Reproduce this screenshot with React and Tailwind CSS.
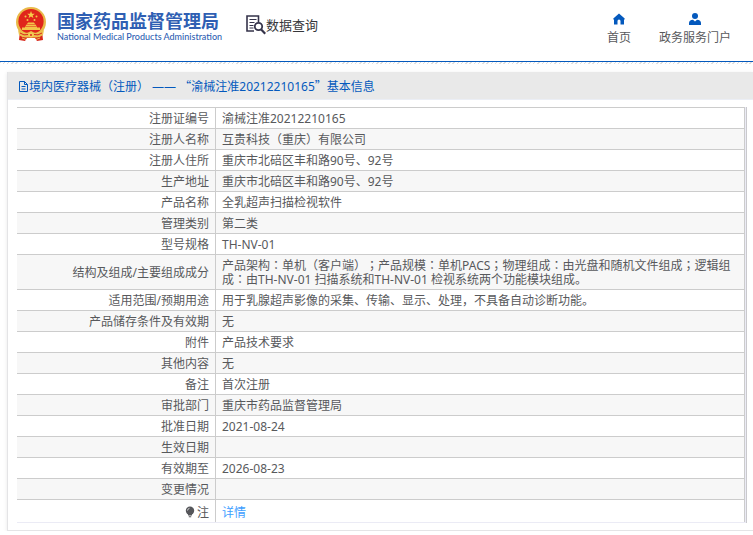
const rows = [
  { label: '注册证编号', value: '渝械注准20212210165' },
  { label: '注册人名称', value: '互贵科技（重庆）有限公司' },
  { label: '注册人住所', value: '重庆市北碚区丰和路90号、92号' },
  { label: '生产地址', value: '重庆市北碚区丰和路90号、92号' },
  { label: '产品名称', value: '全乳超声扫描检视软件' },
  { label: '管理类别', value: '第二类' },
  { label: '型号规格', value: 'TH-NV-01' },
  {
    label: '结构及组成/主要组成成分',
    value: '产品架构：单机（客户端）；产品规模：单机PACS；物理组成：由光盘和随机文件组成；逻辑组成：由TH-NV-01 扫描系统和TH-NV-01 检视系统两个功能模块组成。',
  },
  { label: '适用范围/预期用途', value: '用于乳腺超声影像的采集、传输、显示、处理，不具备自动诊断功能。' },
  { label: '产品储存条件及有效期', value: '无' },
  { label: '附件', value: '产品技术要求' },
  { label: '其他内容', value: '无' },
  { label: '备注', value: '首次注册' },
  { label: '审批部门', value: '重庆市药品监督管理局' },
  { label: '批准日期', value: '2021-08-24' },
  { label: '生效日期', value: '' },
  { label: '有效期至', value: '2026-08-23' },
  { label: '变更情况', value: '' },
]

function Emblem() {
  return (
    <svg viewBox="0 0 32 34" className="w-8 h-[34px] shrink-0" aria-hidden="true">
      <path d="M5 24 L4 33 L10 34 L12 31 H20 L22 34 L28 33 L27 24 Z" fill="#d8281c" />
      <circle cx="16" cy="15" r="15" fill="#e9b949" />
      <circle cx="16" cy="14.5" r="12.6" fill="#e0251b" />
      <path d="M16 4l1 2.700h2.800l-2.200 1.700.8 2.700-2.400-1.600-2.400 1.600.8-2.700-2.200-1.700H15z" fill="#f6cf4a" />
      <g fill="#f3c548">
        <circle cx="10.500" cy="9.500" r="1" />
        <circle cx="21.500" cy="9.500" r="1" />
        <circle cx="12.500" cy="13" r="1" />
        <circle cx="19.500" cy="13" r="1" />
        <path d="M12 17l1-1.500h6l1 1.500zM10.500 19l1-1.500h9l1 1.500zM7 23v-2.500h3V19.500h12v1H25V23z" />
      </g>
      <path d="M3 23q6 3.500 10 2.500l3-1.500 3 1.500q4 1 10-2.500l-1 5q-4 3-8 2.500h-8q-4 .5-8-2.500z" fill="#edc04c" />
      <path d="M5 26q4 3 8 1.500M27 26q-4 3-8 1.500" stroke="#d8281c" fill="none" />
      <circle cx="16" cy="28" r="2.500" fill="#f3cd55" />
      <circle cx="16" cy="28" r="1" fill="#d8281c" />
      <path d="M7 31l4 1.500M25 31l-4 1.500" stroke="#edc04c" />
    </svg>
  )
}

function SearchDocIcon() {
  return (
    <svg viewBox="0 0 20 20" className="w-5 h-5 shrink-0" fill="none" stroke="#35334a" aria-hidden="true">
      <path d="M12.500 7V1H1v15h7" strokeWidth="1.600" />
      <path d="M3.500 4.500h7M3.500 7.500h5M3.500 10.500h4M3.500 13h4" strokeWidth="1.100" />
      <circle cx="12.500" cy="11.500" r="3.700" strokeWidth="1.800" />
      <path d="M15.200 14.500l4 4.300" strokeWidth="2.200" />
    </svg>
  )
}

function HomeIcon() {
  return (
    <svg viewBox="0 0 12 12" className="w-3 h-3" fill="#0459bd" aria-hidden="true">
      <path d="M6 .5L.3 5.500V6.500H1V11.500h3.500V8a1.500 1.500 0 0 1 3 0v3.500H11v-5h.7v-1z" />
    </svg>
  )
}

function UserIcon() {
  return (
    <svg viewBox="0 0 12 12" className="w-3 h-3" fill="#0459bd" aria-hidden="true">
      <circle cx="6" cy="3" r="3" />
      <path d="M0 12V10q0-3 4-3.300L6 8.500l2-1.800q4 .3 4 3.300v2z" />
    </svg>
  )
}

function FileIcon() {
  return (
    <svg viewBox="0 0 11 12" className="w-[11px] h-3 shrink-0" fill="none" stroke="#0459bd" aria-hidden="true">
      <path d="M1.500 .5h5l3 3v7h-8zM6.500 .5v3h3M3.500 5.500h4M3.500 8h4" />
    </svg>
  )
}

function BulbIcon() {
  return (
    <svg viewBox="0 0 10 12" className="inline-block w-[10px] h-3 mr-0.5 align-[-1px]" aria-hidden="true">
      <circle cx="5" cy="4.800" r="4.200" fill="#55565a" />
      <path d="M3 8h4v1.500H3zM3.800 10.200h2.400v1H3.800z" fill="#55565a" />
      <path d="M2.500 4.500a2.500 2.500 0 0 1 2-2.200" stroke="#d5d5d5" fill="none" />
    </svg>
  )
}

// full-width colons and semicolons sit in the middle of their box in the TC face
function CellText({ text }) {
  return text.split(/([：；])/).map((part, i) =>
    i % 2 ? <span key={i} className="font-['Noto_Sans','Noto_Sans_CJK_TC',sans-serif]">{part}</span> : part
  )
}

export default function App() {
  return (
    <div className="bg-white text-xs leading-[14px] text-[#58595c] [text-spacing-trim:space-all] font-['Noto_Sans','Noto_Sans_CJK_SC',sans-serif]">
      <header className="flex items-start h-[61px] pl-[15px] pr-[22px]">
        <a href="#" className="flex items-start pt-[7px]">
          <Emblem />
          <div className="pl-[10px] pt-[2px] text-[#2f5fb3]">
            <div className="text-lg leading-[22px] font-bold whitespace-nowrap font-['Noto_Sans_CJK_SC',sans-serif]">国家药品监督管理局</div>
            <div className="text-[9px] leading-[12px] font-medium whitespace-nowrap font-[Lato,sans-serif]">National Medical Products Administration</div>
          </div>
        </a>
        <a href="#" className="flex items-center ml-6 pt-[15px] text-[#35363a]">
          <SearchDocIcon />
          <span className="text-[13px] leading-5 whitespace-nowrap">数据查询</span>
        </a>
        <nav className="flex gap-7 ml-auto pt-[13px]">
          <a href="#" className="flex flex-col items-center gap-[6px]">
            <HomeIcon />
            <span>首页</span>
          </a>
          <a href="#" className="flex flex-col items-center gap-[6px]">
            <UserIcon />
            <span>政务服务门户</span>
          </a>
        </nav>
      </header>
      <div className="h-px bg-[#0459bd]" />
      <div className="h-[2px] bg-[repeating-linear-gradient(135deg,#dedede_0_1px,#ffffff_1px_3px)]" />

      <main className="mt-2 ml-[7px] border-l border-b border-[#e4e4e6] shadow-[0_1px_4px_#e8e8e8]">
        <h1 className="flex items-center h-7 pt-0.5 pl-[10px] bg-[#e9e9e9] border-b border-[#ebeef5] text-[#0459bd] whitespace-pre">
          <FileIcon />
          <span>
            境内医疗器械（注册） —— <span className="font-['Noto_Sans_CJK_SC',sans-serif]">“</span>渝械注准20212210165<span className="font-['Noto_Sans_CJK_SC',sans-serif]">”</span>基本信息
          </span>
        </h1>
        <div className="pt-[7px] pl-[9px] pr-[6px] pb-[7px]">
          <div className="border-r border-[#c9c9cd]">
            <div className="border-r border-b border-[#ebebf5]">
              <table className="w-full border-separate border-spacing-0 border-t border-[#cccccc]">
                <tbody>
                  {rows.map((row) => (
                    <tr key={row.label} className="even:bg-[#f7f7f7]">
                      <th scope="row" className="w-[199px] pt-1 pb-0.5 pr-[6px] text-right font-normal border-r border-b border-[#cccccc]">{row.label}</th>
                      <td className="pt-1 pb-0.5 px-[6px] border-r border-b border-[#cccccc]"><CellText text={row.value} /></td>
                    </tr>
                  ))}
                  <tr>
                    <th scope="row" className="h-[22px] pt-[3px] pr-[6px] text-right font-normal border-r border-[#cccccc]">
                      <BulbIcon />注
                    </th>
                    <td className="pt-[3px] px-[6px] border-r border-[#cccccc]">
                      <a href="#" className="text-[#409eff]">详情</a>
                    </td>
                  </tr>
                </tbody>
              </table>
            </div>
          </div>
        </div>
      </main>
    </div>
  )
}
